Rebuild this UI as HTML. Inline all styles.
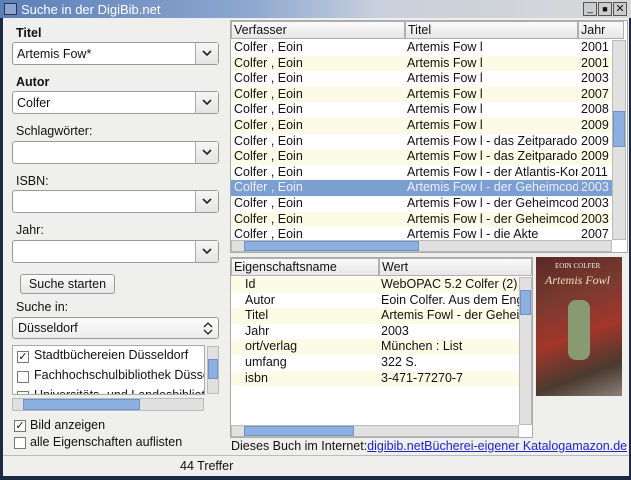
<!DOCTYPE html><html><head><style>
*{box-sizing:border-box;margin:0;padding:0}
body{width:631px;height:480px;overflow:hidden;background:#1c2a44;font-family:"Liberation Sans","DejaVu Sans",sans-serif;font-size:12px;color:#111;position:relative}
.a{position:absolute}
.win{left:3px;top:18px;width:626px;height:458px;background:#efefee}
.title{left:0;top:0;width:631px;height:18px;background:linear-gradient(90deg,#5a7fb8,#8fa8d0 40%,#c8d0dc 60%,#d8d8d8)}
.combo{background:#fff;border:1px solid #9a9a9a;border-radius:3px;height:23px}
.combo .btn{position:absolute;right:0;top:0;width:23px;height:21px;border-left:1px solid #aaa;background:linear-gradient(#f6f6f6,#e4e4e4)}
.combo .btn svg{position:absolute;left:6px;top:7px}
.combo span{position:absolute;left:4px;top:4px;font-size:12.5px}
.lbl{font-size:12.5px}
.b{font-weight:bold}
.row{position:absolute;left:0;width:381px;height:15.6px;font-size:12.5px;line-height:15px;white-space:nowrap;overflow:hidden}
.row span{position:absolute;top:0}
.y{background:#fbfbe6}
.sel{background:#7b9fd0;color:#eef}
.hdr{background:linear-gradient(#fafafa,#e6e6e6);border:1px solid #b0b0b0;height:18px;font-size:12.5px;line-height:17px;padding-left:2px}
.sb{background:#e0e0e0;border:1px solid #bbb}
.thumb{background:#8eb0e0;border:1px solid #6f93c6}
.cb{width:12px;height:12px;border:1px solid #777;background:#fff;font-size:11px;line-height:10px;text-align:center}
a{color:#2222cc;text-decoration:underline}
</style></head><body>
<div class="a title"></div>
<div class="a" style="left:4px;top:3px;width:13px;height:12px;background:#8aa6d0;border:1px solid #334"></div>
<div class="a" style="left:21px;top:2px;color:#fff;font-size:13px">Suche in der DigiBib.net</div>
<div class="a" style="left:583px;top:2px;width:14px;height:14px;background:#ccc;border:1px solid #555;font-size:10px;text-align:center;line-height:12px">_</div>
<div class="a" style="left:598px;top:2px;width:14px;height:14px;background:#ccc;border:1px solid #555;font-size:9px;text-align:center;line-height:12px">■</div>
<div class="a" style="left:613px;top:2px;width:14px;height:14px;background:#ccc;border:1px solid #555;font-size:11px;font-weight:bold;text-align:center;line-height:12px">✕</div>
<div class="a win"></div>

<div class="a lbl b" style="left:16px;top:26px">Titel</div>
<div class="a combo" style="left:12px;top:42px;width:207px"><span>Artemis Fow*</span><div class="btn"><svg width="10" height="7"><path d="M1 1L5 5L9 1" stroke="#222" stroke-width="1.6" fill="none"/></svg></div></div>
<div class="a lbl b" style="left:16px;top:75px">Autor</div>
<div class="a combo" style="left:12px;top:91px;width:207px"><span>Colfer</span><div class="btn"><svg width="10" height="7"><path d="M1 1L5 5L9 1" stroke="#222" stroke-width="1.6" fill="none"/></svg></div></div>
<div class="a lbl" style="left:16px;top:124px">Schlagwörter:</div>
<div class="a combo" style="left:12px;top:141px;width:207px"><div class="btn"><svg width="10" height="7"><path d="M1 1L5 5L9 1" stroke="#222" stroke-width="1.6" fill="none"/></svg></div></div>
<div class="a lbl" style="left:16px;top:174px">ISBN:</div>
<div class="a combo" style="left:12px;top:190px;width:207px"><div class="btn"><svg width="10" height="7"><path d="M1 1L5 5L9 1" stroke="#222" stroke-width="1.6" fill="none"/></svg></div></div>
<div class="a lbl" style="left:16px;top:223px">Jahr:</div>
<div class="a combo" style="left:12px;top:240px;width:207px"><div class="btn"><svg width="10" height="7"><path d="M1 1L5 5L9 1" stroke="#222" stroke-width="1.6" fill="none"/></svg></div></div>
<div class="a" style="left:20px;top:274px;width:95px;height:20px;border:1px solid #999;border-radius:3px;background:linear-gradient(#fbfbfb,#e6e6e6);font-size:12.5px;text-align:center;line-height:18px">Suche starten</div>
<div class="a lbl" style="left:16px;top:300px">Suche in:</div>
<div class="a" style="left:12px;top:317px;width:207px;height:22px;border:1px solid #999;border-radius:3px;background:linear-gradient(#fbfbfb,#ececec);font-size:12.5px;padding:3px 5px">Düsseldorf<svg style="position:absolute;right:5px;top:4px" width="10" height="13"><path d="M1 5L5 1L9 5M1 8L5 12L9 8" stroke="#222" stroke-width="1.3" fill="none"/></svg></div>
<div class="a" style="left:12px;top:345px;width:193px;height:50px;background:#fff;border:1px solid #aaa;overflow:hidden">
<div class="a cb" style="left:4px;top:5px">✓</div><div class="a lbl" style="left:21px;top:2px;white-space:nowrap">Stadtbüchereien Düsseldorf</div>
<div class="a cb" style="left:4px;top:25px"></div><div class="a lbl" style="left:21px;top:22px;white-space:nowrap">Fachhochschulbibliothek Düsse</div>
<div class="a cb" style="left:4px;top:45px"></div><div class="a lbl" style="left:21px;top:42px;white-space:nowrap">Universitäts- und Landesbibliot</div></div>
<div class="a sb" style="left:207px;top:346px;width:12px;height:48px"><div class="a thumb" style="left:0;top:12px;width:10px;height:20px"></div></div>
<div class="a sb" style="left:12px;top:398px;width:192px;height:13px"><div class="a thumb" style="left:10px;top:0;width:117px;height:11px"></div></div>
<div class="a cb" style="left:14px;top:420px">✓</div><div class="a lbl" style="left:30px;top:418px">Bild anzeigen</div>
<div class="a cb" style="left:14px;top:437px"></div><div class="a lbl" style="left:30px;top:435px">alle Eigenschaften auflisten</div>
<div class="a" style="left:3px;top:455px;width:626px;height:1px;background:#bbb"></div>
<div class="a lbl" style="left:180px;top:459px">44 Treffer</div>

<div class="a" style="left:230px;top:20px;width:398px;height:233px;background:#fff;border:1px solid #aaa"></div>
<div class="a hdr" style="left:231px;top:21px;width:174px">Verfasser</div>
<div class="a hdr" style="left:405px;top:21px;width:173px">Titel</div>
<div class="a hdr" style="left:578px;top:21px;width:46px">Jahr</div>
<div class="a" style="left:231px;top:40px;width:381px;height:200px;overflow:hidden">
<div class="row" style="top:0"><span style="left:3px">Colfer , Eoin</span><span style="left:176px">Artemis Fow l</span><span style="left:350px">2001</span></div>
<div class="row y" style="top:15.6px"><span style="left:3px">Colfer , Eoin</span><span style="left:176px">Artemis Fow l</span><span style="left:350px">2001</span></div>
<div class="row" style="top:31.2px"><span style="left:3px">Colfer , Eoin</span><span style="left:176px">Artemis Fow l</span><span style="left:350px">2003</span></div>
<div class="row y" style="top:46.8px"><span style="left:3px">Colfer , Eoin</span><span style="left:176px">Artemis Fow l</span><span style="left:350px">2007</span></div>
<div class="row" style="top:62.4px"><span style="left:3px">Colfer , Eoin</span><span style="left:176px">Artemis Fow l</span><span style="left:350px">2008</span></div>
<div class="row y" style="top:78px"><span style="left:3px">Colfer , Eoin</span><span style="left:176px">Artemis Fow l</span><span style="left:350px">2009</span></div>
<div class="row" style="top:93.6px"><span style="left:3px">Colfer , Eoin</span><span style="left:176px">Artemis Fow l - das Zeitparado</span><span style="left:347px;padding-left:3px;background:#fff">2009</span></div>
<div class="row y" style="top:109.2px"><span style="left:3px">Colfer , Eoin</span><span style="left:176px">Artemis Fow l - das Zeitparado</span><span style="left:347px;padding-left:3px;background:#fbfbe6">2009</span></div>
<div class="row" style="top:124.8px"><span style="left:3px">Colfer , Eoin</span><span style="left:176px">Artemis Fow l - der Atlantis-Kor</span><span style="left:347px;padding-left:3px;background:#fff">2011</span></div>
<div class="row sel" style="top:140.4px"><span style="left:3px">Colfer , Eoin</span><span style="left:176px">Artemis Fow l - der Geheimcod</span><span style="left:347px;padding-left:3px;background:#7b9fd0">2003</span></div>
<div class="row" style="top:156px"><span style="left:3px">Colfer , Eoin</span><span style="left:176px">Artemis Fow l - der Geheimcod</span><span style="left:347px;padding-left:3px;background:#fff">2003</span></div>
<div class="row y" style="top:171.6px"><span style="left:3px">Colfer , Eoin</span><span style="left:176px">Artemis Fow l - der Geheimcod</span><span style="left:347px;padding-left:3px;background:#fbfbe6">2003</span></div>
<div class="row" style="top:187.2px"><span style="left:3px">Colfer , Eoin</span><span style="left:176px">Artemis Fow l - die Akte</span><span style="left:350px">2007</span></div>
</div>
<div class="a sb" style="left:612px;top:40px;width:14px;height:200px"><div class="a thumb" style="left:0;top:70px;width:12px;height:36px"></div></div>
<div class="a sb" style="left:231px;top:240px;width:381px;height:12px"><div class="a thumb" style="left:12px;top:0;width:175px;height:10px"></div></div>

<div class="a" style="left:230px;top:257px;width:303px;height:181px;background:#fff;border:1px solid #aaa"></div>
<div class="a hdr" style="left:231px;top:258px;width:148px">Eigenschaftsname</div>
<div class="a hdr" style="left:379px;top:258px;width:153px">Wert</div>
<div class="a" style="left:231px;top:277px;width:288px;height:148px;overflow:hidden">
<div class="row y" style="top:0;width:288px"><span style="left:14px">Id</span><span style="left:150px">WebOPAC 5.2 Colfer (2)</span></div>
<div class="row" style="top:15.6px;width:288px"><span style="left:14px">Autor</span><span style="left:150px">Eoin Colfer. Aus dem Eng</span></div>
<div class="row y" style="top:31.2px;width:288px"><span style="left:14px">Titel</span><span style="left:150px">Artemis Fowl - der Geheir</span></div>
<div class="row" style="top:46.8px;width:288px"><span style="left:14px">Jahr</span><span style="left:150px">2003</span></div>
<div class="row y" style="top:62.4px;width:288px"><span style="left:14px">ort/verlag</span><span style="left:150px">München : List</span></div>
<div class="row" style="top:78px;width:288px"><span style="left:14px">umfang</span><span style="left:150px">322 S.</span></div>
<div class="row y" style="top:93.6px;width:288px"><span style="left:14px">isbn</span><span style="left:150px">3-471-77270-7</span></div>
</div>
<div class="a sb" style="left:519px;top:277px;width:13px;height:148px"><div class="a thumb" style="left:0;top:12px;width:11px;height:25px"></div></div>
<div class="a sb" style="left:231px;top:425px;width:288px;height:12px"><div class="a thumb" style="left:12px;top:0;width:110px;height:10px"></div></div>
<div class="a" style="left:536px;top:257px;width:86px;height:139px;background:linear-gradient(160deg,#5a2a26,#7a3a30 30%,#a2362a 55%,#4a3a30 80%,#8a8078)"></div>
<div class="a" style="left:555px;top:262px;font-size:7px;color:#eee;font-family:'Liberation Serif',serif">EOIN COLFER</div>
<div class="a" style="left:545px;top:273px;font-size:12px;color:#f0e0c0;font-style:italic;font-family:'Liberation Serif',serif">Artemis Fowl</div>
<div class="a" style="left:568px;top:300px;width:22px;height:60px;background:#8a9a70;border-radius:8px"></div>
<div class="a lbl" style="left:231px;top:439px;white-space:nowrap">Dieses Buch im Internet:<a>digibib.net</a><a>Bücherei-eigener Katalog</a><a>amazon.de</a></div>
</body></html>
